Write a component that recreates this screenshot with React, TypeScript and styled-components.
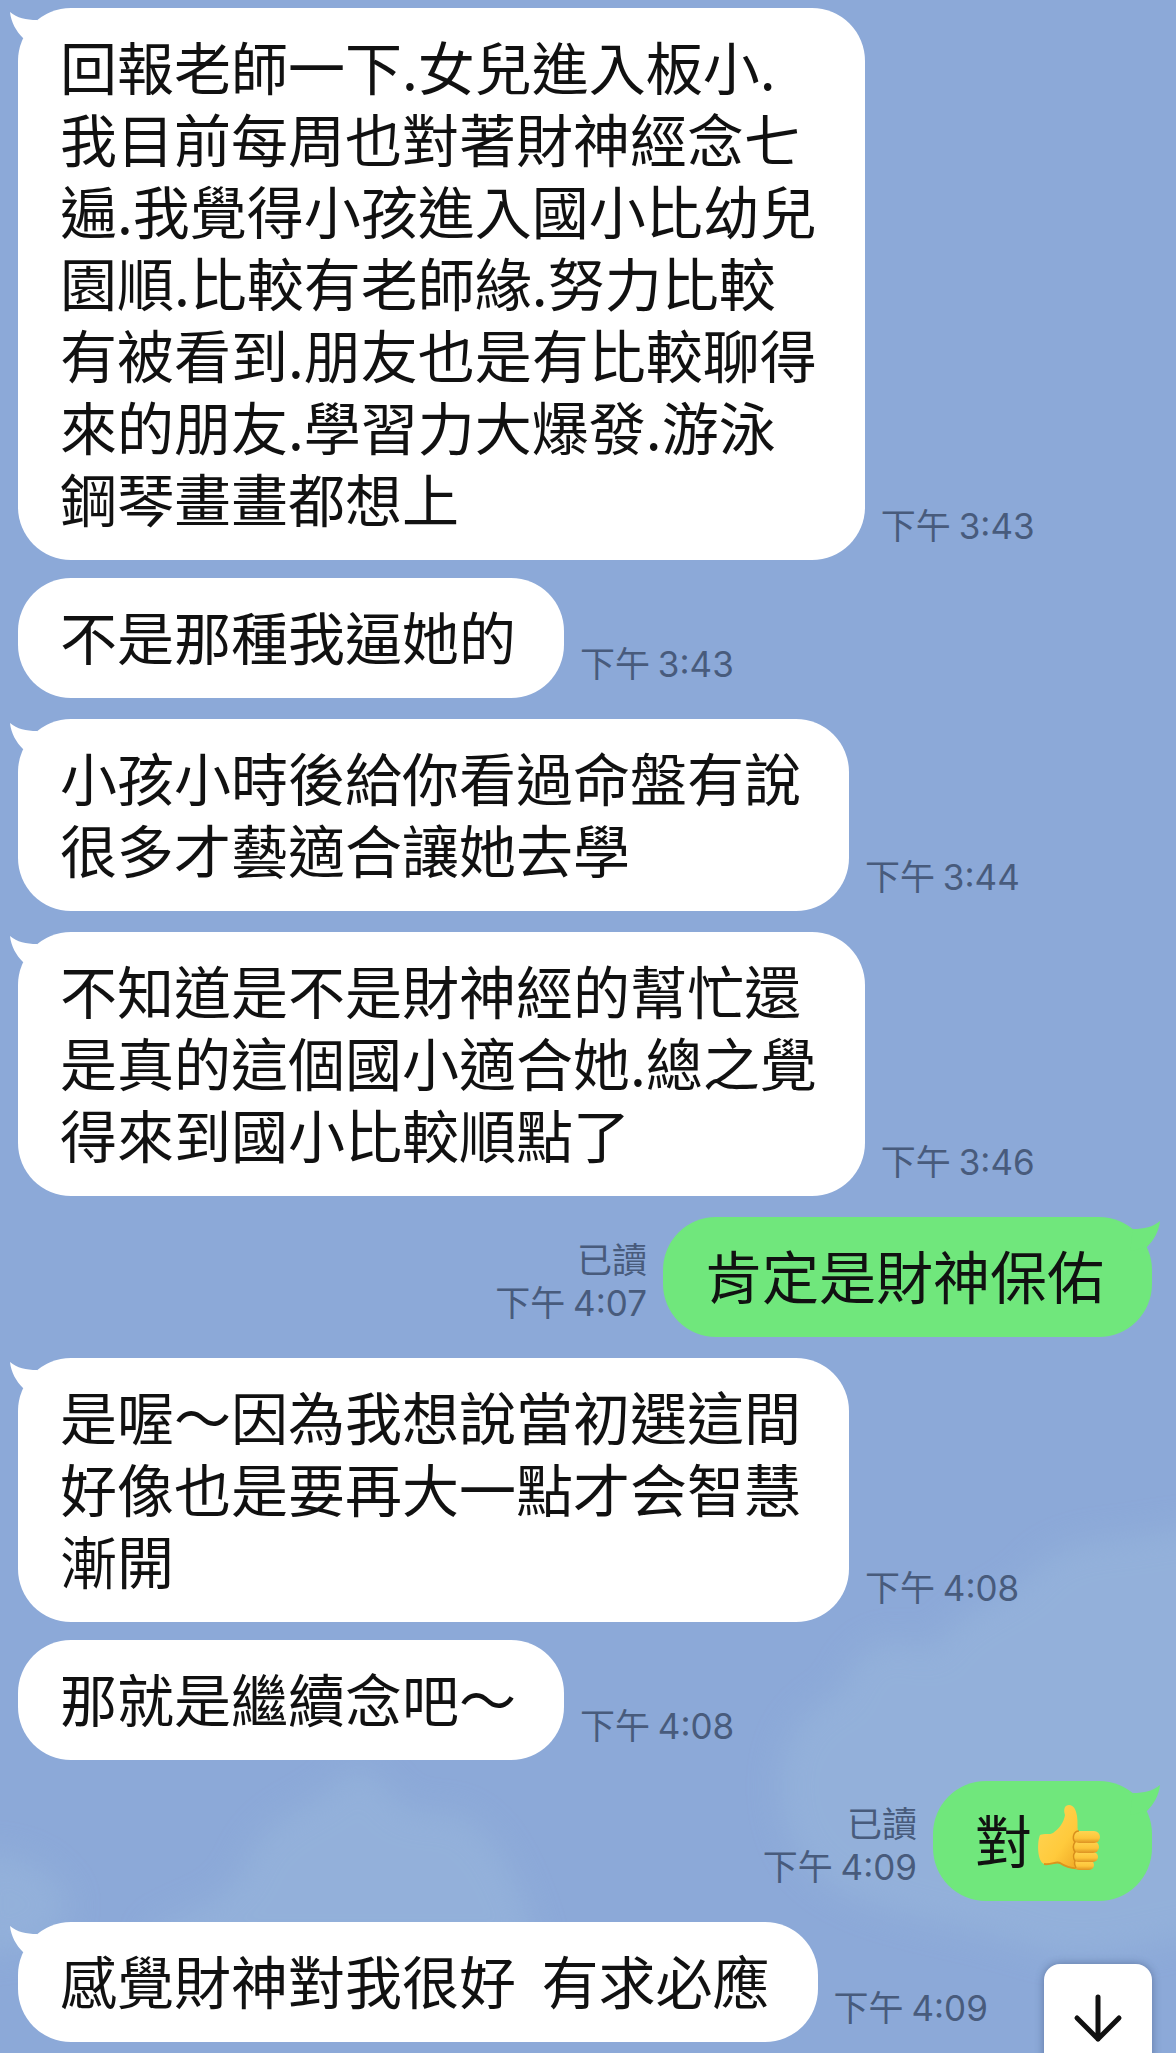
import React from "react";
import styled, { createGlobalStyle } from "styled-components";

const GlobalStyle = createGlobalStyle`
  *, *::before, *::after { box-sizing: border-box; }
  body { margin: 0; background: #8ca9d8; }
`;

const Page = styled.main`
  position: relative;
  min-height: 100vh;
  overflow: hidden;
  background: #8ca9d8;
  font-family: "Noto Sans CJK TC", "Noto Sans", sans-serif;
`;

const Sky = styled.svg`
  position: absolute;
  left: 0;
  bottom: 0;
  width: 100%;
  height: 560px;
`;

const Thread = styled.ol`
  position: relative;
  display: flex;
  flex-direction: column;
  margin: 0;
  padding: 8px 24px 11px 18px;
  list-style: none;
`;

const Row = styled.li<{ $own: boolean; $follow: boolean }>`
  display: flex;
  flex-direction: ${(p) => (p.$own ? "row-reverse" : "row")};
  align-items: flex-end;
  gap: 16px;
  margin-top: ${(p) => (p.$follow ? "18px" : "21px")};

  &:first-child { margin-top: 0; }
`;

const Bubble = styled.div<{ $own: boolean }>`
  position: relative;
  padding: 21px 48px 27px 42px;
  border-radius: 53px;
  background: ${(p) => (p.$own ? "#70e77c" : "#ffffff")};
  color: #111111;
`;

const Message = styled.p`
  display: flex;
  align-items: center;
  margin: 0;
  font-size: 57px;
  line-height: 72px;
  white-space: pre-wrap;
`;

const TailShape = styled.svg<{ $own: boolean }>`
  position: absolute;
  top: 4px;
  ${(p) => (p.$own ? "right: -8px; transform: scaleX(-1);" : "left: -8px;")}
  width: 32px;
  height: 32px;
  fill: ${(p) => (p.$own ? "#70e77c" : "#ffffff")};
`;

const Meta = styled.div<{ $own: boolean }>`
  display: flex;
  flex-direction: column;
  flex-shrink: 0;
  align-items: ${(p) => (p.$own ? "flex-end" : "flex-start")};
  padding-bottom: 12px;
  color: #485b7c;
  font-family: Inter, "Noto Sans CJK TC", sans-serif;
  font-size: 35px;
  font-weight: 400;
  line-height: 43px;
  white-space: nowrap;
`;

const Period = styled.span`
  font-family: "Noto Sans CJK TC", sans-serif;
  line-height: 1;
`;

const Thumb = styled.svg`
  width: 72px;
  height: 72px;
`;

const ScrollButton = styled.button`
  position: fixed;
  right: 24px;
  bottom: -19px;
  display: grid;
  place-items: center;
  width: 108px;
  height: 108px;
  padding: 0;
  border: 0;
  border-radius: 16px;
  background: #ffffff;
  box-shadow: 0 0 8px rgba(40, 60, 100, 0.45);
  cursor: pointer;
`;

function Tail({ own }: { own: boolean }) {
  return (
    <TailShape $own={own} viewBox="0 0 32 32" aria-hidden="true">
      <path d="M0 0C7 6 16 8 27 8L30 30L13 26C6 19 1 10 0 0Z" />
    </TailShape>
  );
}

function ThumbsUp() {
  return (
    <Thumb viewBox="0 0 72 72" role="img" aria-label="讚">
      <defs>
        <linearGradient id="skin" x1="0" y1="0" x2="1" y2="1">
          <stop offset="0" stopColor="#ffd658" />
          <stop offset="0.6" stopColor="#ffca3c" />
          <stop offset="1" stopColor="#eda423" />
        </linearGradient>
        <linearGradient id="finger" x1="0" y1="0" x2="0" y2="1">
          <stop offset="0" stopColor="#ffd450" />
          <stop offset="0.6" stopColor="#fdc53a" />
          <stop offset="1" stopColor="#dd9322" />
        </linearGradient>
      </defs>
      <path
        d="M8 33C12 31 18 33 21 31C27 27 32 20 33 13C31 7 33 3 37 3C42 3 44 8 45 14C46 20 45 25 46 29L50 33V66C43 67 35 65 28 61C23 59 20 63 12 62C5 59 5 40 8 33Z"
        fill="url(#skin)"
      />
      <path d="M12 62C20 63 24 59 28 61C34 65 41 67 48 66" fill="none" stroke="#dc941d" strokeWidth="2" />
      <rect x="42" y="58" width="20" height="10" rx="5" fill="url(#finger)" />
      <rect x="41" y="50" width="25" height="10" rx="5" fill="url(#finger)" />
      <rect x="41" y="39" width="26" height="12" rx="6" fill="url(#finger)" />
      <rect x="41" y="29" width="27" height="12" rx="6" fill="url(#finger)" />
      <path
        d="M47 29C41 29 40 37 43 40C41 43 41 47 43 50C41 53 41 56 43 59C42 61 43 64 44 66"
        fill="none"
        stroke="#d98f1c"
        strokeWidth="1.5"
      />
    </Thumb>
  );
}

type Entry = {
  text: string;
  time: string;
  own?: boolean;
  follow?: boolean;
  thumb?: boolean;
};

const entries: Entry[] = [
  {
    text: "回報老師一下.女兒進入板小.\n我目前每周也對著財神經念七\n遍.我覺得小孩進入國小比幼兒\n園順.比較有老師緣.努力比較\n有被看到.朋友也是有比較聊得\n來的朋友.學習力大爆發.游泳\n鋼琴畫畫都想上",
    time: "3:43",
  },
  { text: "不是那種我逼她的", time: "3:43", follow: true },
  { text: "小孩小時後給你看過命盤有說\n很多才藝適合讓她去學", time: "3:44" },
  {
    text: "不知道是不是財神經的幫忙還\n是真的這個國小適合她.總之覺\n得來到國小比較順點了",
    time: "3:46",
  },
  { text: "肯定是財神保佑", time: "4:07", own: true },
  {
    text: "是喔～因為我想說當初選這間\n好像也是要再大一點才会智慧\n漸開",
    time: "4:08",
  },
  { text: "那就是繼續念吧～", time: "4:08", follow: true },
  { text: "對", time: "4:09", own: true, thumb: true },
  { text: "感覺財神對我很好  有求必應", time: "4:09" },
];

export default function App() {
  return (
    <>
      <GlobalStyle />
      <Page>
        <Sky viewBox="0 0 1176 560" preserveAspectRatio="none" aria-hidden="true">
          <defs>
            <filter id="haze" x="-20%" y="-20%" width="140%" height="140%">
              <feGaussianBlur stdDeviation="16" />
            </filter>
          </defs>
          <g filter="url(#haze)" fill="#97b5dc" opacity="0.65">
            <path d="M785 330C770 270 790 220 840 200C860 140 900 140 930 160C960 110 1010 110 1040 70C1080 40 1120 50 1150 40L1230 30V440C1150 440 1100 480 1020 450C920 420 810 420 785 330Z" />
            <path d="M150 440C190 410 230 420 250 360C280 310 320 320 355 270C395 290 390 320 430 320C490 310 520 390 540 460L150 460Z" />
            <path d="M-30 360C20 360 50 370 70 410C60 450 20 460 -30 460Z" />
          </g>
        </Sky>
        <Thread>
          {entries.map((entry, index) => {
            const own = Boolean(entry.own);
            return (
              <Row key={index} $own={own} $follow={Boolean(entry.follow)}>
                <Bubble $own={own}>
                  {!entry.follow && <Tail own={own} />}
                  <Message>
                    {entry.text}
                    {entry.thumb && <ThumbsUp />}
                  </Message>
                </Bubble>
                <Meta $own={own}>
                  {own && <span>已讀</span>}
                  <time>
                    <Period>下午 </Period>
                    {entry.time}
                  </time>
                </Meta>
              </Row>
            );
          })}
        </Thread>
        <ScrollButton type="button" aria-label="捲動至最新訊息">
          <svg width="54" height="54" viewBox="0 0 54 54" fill="none" stroke="#111111" strokeWidth="5" strokeLinecap="round" strokeLinejoin="round" aria-hidden="true">
            <path d="M27 6V48M6 27L27 48L48 27" />
          </svg>
        </ScrollButton>
      </Page>
    </>
  );
}
